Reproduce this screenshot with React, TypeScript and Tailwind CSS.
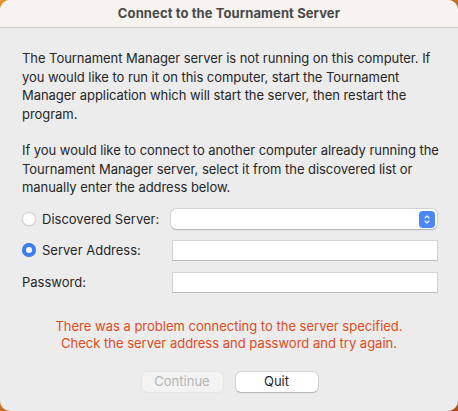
import { ChevronUp, ChevronDown } from "lucide-react";

function Radio({ checked }: { checked?: boolean }) {
  if (checked) {
    return (
      <span className="flex h-[14px] w-[14px] items-center justify-center rounded-full bg-[#3b7ff6] shadow-[inset_0_0_0_0.5px_rgba(0,0,0,0.15)]">
        <span className="h-[6px] w-[6px] rounded-full bg-white" />
      </span>
    );
  }
  return (
    <span className="h-[14px] w-[14px] rounded-full border border-[#cfcfcf] bg-white shadow-[0_0.5px_1px_rgba(0,0,0,0.1)]" />
  );
}

function TextField() {
  return (
    <div className="h-[21px] w-[266px] border border-[#d2d2d2] border-b-[#bdbdbd] bg-white" />
  );
}

export default function App() {
  return (
    <div className="h-[411px] w-[458px] bg-gradient-to-br from-[#e3922c] to-[#b24a17] font-['Inter',sans-serif] text-[13px] text-[#262626]">
      <div className="flex h-full flex-col overflow-hidden rounded-[10px] bg-[#ececec]">
        <header className="flex h-[28px] shrink-0 items-center justify-center border-b border-[#cdcbc9] bg-[#f6f3f0]">
          <h1 className="text-[13px] font-bold tracking-[0.1px] text-[#4b4a49]">Connect to the Tournament Server</h1>
        </header>

        <section className="flex flex-col pl-[22px] pr-[14px] pt-[21px] leading-[18.7px] tracking-[-0.05px]">
          <p>
            The Tournament Manager server is not running on this computer. If you would like to run it on this
            computer, start the Tournament Manager application which will start the server, then restart the
            program.
          </p>
          <p className="mt-[17px]">
            If you would like to connect to another computer already running the Tournament Manager server, select it
            from the discovered list or manually enter the address below.
          </p>
        </section>

        <section className="mt-[12px] flex flex-col gap-[10px] pl-[22px]">
          <div className="flex h-[21px] items-center">
            <div className="flex w-[149px] items-center gap-[6px]">
              <Radio />
              <span>Discovered Server:</span>
            </div>
            <div className="flex h-[20px] w-[266px] items-center justify-end rounded-[5px] bg-white pr-[2px] shadow-[0_0_0_0.5px_rgba(0,0,0,0.15),0_0.5px_1.5px_rgba(0,0,0,0.2)]">
              <span className="flex h-[17px] w-[16px] flex-col items-center justify-center rounded-[4px] bg-[#4a86f7] text-white">
                <ChevronUp className="-mb-[3px] h-[8px] w-[8px]" strokeWidth={3.5} />
                <ChevronDown className="h-[8px] w-[8px]" strokeWidth={3.5} />
              </span>
            </div>
          </div>
          <div className="flex h-[21px] items-center">
            <div className="flex w-[150px] items-center gap-[6px]">
              <Radio checked />
              <span>Server Address:</span>
            </div>
            <TextField />
          </div>
          <div className="mt-[1px] flex h-[21px] items-center">
            <div className="w-[150px]">Password:</div>
            <TextField />
          </div>
        </section>

        <p className="mt-[25px] text-center leading-[17px] text-[#de4b1d]">
          There was a problem connecting to the server specified.
          <br />
          Check the server address and password and try again.
        </p>

        <footer className="mt-[20px] flex justify-center gap-[13px] pl-[1px]">
          <button className="h-[20px] w-[81px] rounded-[5px] bg-[#f3f3f3] text-[13px] text-[#b4b4b4] shadow-[0_0_0_0.5px_rgba(0,0,0,0.06)]">
            Continue
          </button>
          <button className="h-[20px] w-[82px] rounded-[5px] bg-white text-[13px] text-[#1f1f1f] shadow-[0_0_0_0.5px_rgba(0,0,0,0.12),0_0.5px_1.5px_rgba(0,0,0,0.2)]">
            Quit
          </button>
        </footer>
      </div>
    </div>
  );
}
